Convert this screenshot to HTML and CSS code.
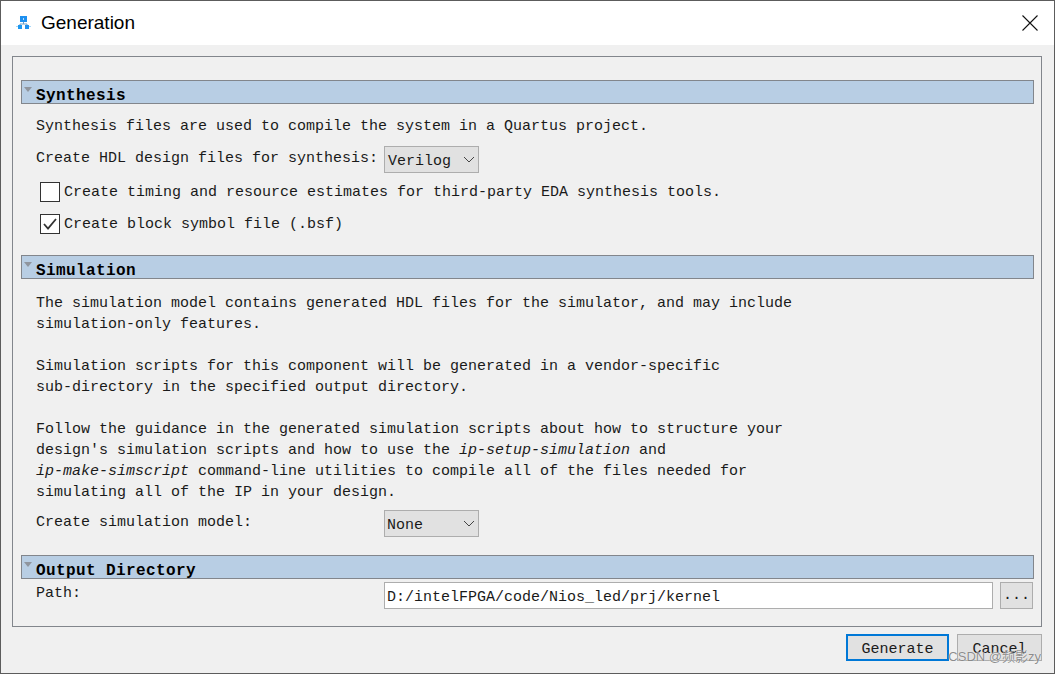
FILE: index.html
```html
<!DOCTYPE html>
<html lang="en">
<head>
  <meta charset="UTF-8">
  <title>Generation</title>
  <link rel="stylesheet" href="styles.css">
</head>
<body>

<div class="dialog">
  <!-- TITLE BAR -->
  <div class="titlebar">
    <svg class="title-icon" width="16" height="14" viewBox="0 0 16 14">
      <path d="M7.5 5v3M4 10V8h7v2" fill="none" stroke="#6f9fc8" stroke-width="1"/>
      <rect x="4" y="0" width="7" height="6" fill="#1e90f0"/>
      <rect x="7" y="2" width="1" height="2" fill="#bfe0fa"/>
      <rect x="2" y="9" width="4" height="4" fill="#1e98f0"/>
      <rect x="9" y="9" width="4" height="4" fill="#1e90f0"/>
      <rect x="0" y="10" width="2" height="1" fill="#a8d8f8"/>
      <rect x="13" y="10" width="2" height="1" fill="#a8d8f8"/>
    </svg>
    <span class="title-text">Generation</span>
    <svg class="close-icon" width="16" height="16" viewBox="0 0 16 16">
      <path d="M0.5 0.5L15.5 15.5M15.5 0.5L0.5 15.5" stroke="#111" stroke-width="1.1" fill="none"/>
    </svg>
  </div>

  <div class="content">
    <div class="panel">

      <!-- SYNTHESIS -->
      <div class="section-head"><span class="arrow"></span>Synthesis</div>
      <div class="section-body synth">
        <p class="line">Synthesis files are used to compile the system in a Quartus project.</p>
        <div class="row">
          <span class="line hdl-label">Create HDL design files for synthesis:</span>
          <div class="combo combo-verilog">Verilog
            <svg class="chevron" width="12" height="7" viewBox="0 0 12 7"><path d="M1 1l5 5 5-5" fill="none" stroke="#444" stroke-width="1"/></svg>
          </div>
        </div>
        <label class="check-row">
          <span class="check"></span>
          <span>Create timing and resource estimates for third-party EDA synthesis tools.</span>
        </label>
        <label class="check-row">
          <span class="check">
            <svg width="18" height="18" viewBox="0 0 18 18"><path d="M3 9l4 4.5L15 4" fill="none" stroke="#333" stroke-width="1.8"/></svg>
          </span>
          <span>Create block symbol file (.bsf)</span>
        </label>
      </div>

      <!-- SIMULATION -->
      <div class="section-head"><span class="arrow"></span>Simulation</div>
      <div class="section-body sim">
        <p class="para">The simulation model contains generated HDL files for the simulator, and may include<br>simulation-only features.</p>
        <p class="para">Simulation scripts for this component will be generated in a vendor-specific<br>sub-directory in the specified output directory.</p>
        <p class="para">Follow the guidance in the generated simulation scripts about how to structure your<br>design's simulation scripts and how to use the <i>ip-setup-simulation</i> and<br><i>ip-make-simscript</i> command-line utilities to compile all of the files needed for<br>simulating all of the IP in your design.</p>
        <div class="row row-sim">
          <span class="field-label">Create simulation model:</span>
          <div class="combo combo-none">None
            <svg class="chevron" width="12" height="7" viewBox="0 0 12 7"><path d="M1 1l5 5 5-5" fill="none" stroke="#444" stroke-width="1"/></svg>
          </div>
        </div>
      </div>

      <!-- OUTPUT DIRECTORY -->
      <div class="section-head"><span class="arrow"></span>Output Directory</div>
      <div class="section-body output">
        <div class="row row-path">
          <span class="field-label path-label">Path:</span>
          <div class="path-input">D:/intelFPGA/code/Nios_led/prj/kernel</div>
          <div class="browse">...</div>
        </div>
      </div>

    </div>

    <!-- BUTTONS -->
    <div class="buttons">
      <div class="btn btn-default">Generate</div>
      <div class="btn">Cancel</div>
    </div>
  </div>

  <div class="watermark">CSDN @频影zy</div>
</div>

</body>
</html>
```

FILE: styles.css
```css
html, body {
  margin: 0;
  padding: 0;
  height: 100%;
  overflow: hidden;
  background: #555;
}

.dialog {
  position: relative;
  box-sizing: border-box;
  width: 1055px;
  height: 674px;
  border: 1px solid #5c5c5c;
  background: #f0f0f0;
  font-family: "Liberation Mono", monospace;
  font-size: 15px;
  color: #1a1a1a;
}

.titlebar {
  display: flex;
  align-items: center;
  height: 44px;
  padding: 0 16px 0 15px;
  background: #fff;
}

.title-icon {
  margin-right: 9px;
}

.title-text {
  font-family: "Liberation Sans", Arial, sans-serif;
  font-size: 19px;
  color: #000;
}

.close-icon {
  margin-left: auto;
  margin-right: 0;
}

.content {
  padding: 11px 11px 0;
}

.panel {
  box-sizing: border-box;
  height: 571px;
  margin-right: 1px;
  padding: 23px 7px 0 8px;
  border: 1px solid #82868c;
}

.section-head {
  position: relative;
  box-sizing: border-box;
  height: 24px;
  padding: 6px 0 0 14px;
  border: 1px solid #82868c;
  background: #b8cee4;
  font-weight: bold;
  font-size: 16px;
  line-height: 18px;
  letter-spacing: 0.4px;
  color: #000;
  overflow: hidden;
}

.arrow {
  position: absolute;
  left: 2px;
  top: 6px;
  border-left: 4px solid transparent;
  border-right: 4px solid transparent;
  border-top: 5px solid #8f959e;
}

.section-body {
  padding-left: 15px;
}

.synth {
  height: 151px;
  padding-top: 12px;
  box-sizing: border-box;
}

.line {
  margin: 0;
  line-height: 21px;
}

.hdl-label {
  margin-top: -1px;
}

.row {
  display: flex;
  align-items: center;
}

.synth .row {
  margin-top: 9px;
  height: 26px;
}

.combo {
  position: relative;
  box-sizing: border-box;
  height: 27px;
  padding: 4px 0 0 3px;
  border: 1px solid #adadad;
  background: #e1e1e1;
  line-height: 22px;
}

.combo-verilog {
  width: 95px;
  margin-left: 6px;
}

.combo-none {
  width: 95px;
  padding-left: 2px;
}

.chevron {
  position: absolute;
  right: 3px;
  top: 9px;
}

.check-row {
  display: flex;
  align-items: center;
  height: 24px;
  margin-left: 4px;
  margin-top: 8px;
}

.check {
  box-sizing: border-box;
  display: block;
  width: 20px;
  height: 20px;
  margin-right: 4px;
  border: 1px solid #333;
  background: #fff;
}

.check svg {
  display: block;
}

.sim {
  box-sizing: border-box;
  height: 276px;
  padding-top: 14px;
}

.para {
  margin: 0 0 21px;
  line-height: 21px;
}

.row-sim {
  margin-top: -14px;
}

.field-label {
  width: 348px;
  flex: none;
  margin-top: -2px;
}

.output {
  padding-top: 3px;
  padding-right: 1px;
}

.path-label {
  margin-top: -4px;
}

.path-input {
  box-sizing: border-box;
  width: 609px;
  height: 27px;
  padding: 3px 0 0 2px;
  border: 1px solid #adadad;
  background: #fff;
  line-height: 24px;
}

.browse {
  box-sizing: border-box;
  width: 33px;
  height: 27px;
  margin-left: 7px;
  border: 1px solid #adadad;
  background: #e1e1e1;
  text-align: center;
  line-height: 25px;
}

.buttons {
  display: flex;
  justify-content: flex-end;
  gap: 8px;
  margin-top: 7px;
  margin-right: 1px;
}

.btn {
  box-sizing: border-box;
  width: 85px;
  height: 27px;
  padding-top: 2px;
  border: 1px solid #adadad;
  background: #e1e1e1;
  text-align: center;
  line-height: 26px;
}

.btn-default {
  width: 103px;
  padding-top: 1px;
  border: 2px solid #0078d7;
  line-height: 25px;
}

.watermark {
  position: absolute;
  right: 13px;
  bottom: 8px;
  font-family: "Liberation Sans", "Noto Sans CJK SC", sans-serif;
  font-size: 13px;
  color: rgba(120, 120, 120, 0.85);
  text-shadow: 0 0 1px #fff;
}
```
